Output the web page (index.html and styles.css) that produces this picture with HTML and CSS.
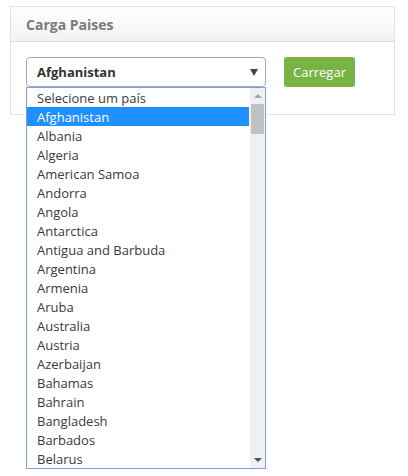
FILE: index.html
```html
<!DOCTYPE html>
<html>
<head>
<meta charset="utf-8">
<link rel="stylesheet" href="styles.css">
</head>
<body>
<div class="panel">
  <div class="panel-head">Carga Paises</div>
  <div class="panel-body">
    <div class="select-wrap">
      <div class="select">
        <span class="select-value">Afghanistan</span>
        <span class="select-arrow"></span>
      </div>
      <div class="listbox">
        <ul class="options">
          <li>Selecione um país</li>
          <li class="selected">Afghanistan</li>
          <li>Albania</li>
          <li>Algeria</li>
          <li>American Samoa</li>
          <li>Andorra</li>
          <li>Angola</li>
          <li>Antarctica</li>
          <li>Antigua and Barbuda</li>
          <li>Argentina</li>
          <li>Armenia</li>
          <li>Aruba</li>
          <li>Australia</li>
          <li>Austria</li>
          <li>Azerbaijan</li>
          <li>Bahamas</li>
          <li>Bahrain</li>
          <li>Bangladesh</li>
          <li>Barbados</li>
          <li>Belarus</li>
        </ul>
        <div class="scrollbar">
          <div class="sb-btn"><span class="tri-up"></span></div>
          <div class="sb-track"><div class="sb-thumb"></div></div>
          <div class="sb-btn"><span class="tri-down"></span></div>
        </div>
      </div>
    </div>
    <button class="btn">Carregar</button>
  </div>
</div>
</body>
</html>
```
FILE: styles.css
```css
html, body {
  margin: 0;
  padding: 0;
  background: #fff;
  font-family: "Open Sans", "Noto Sans", sans-serif;
}
body {
  min-height: 476px;
}
.panel {
  margin: 6px 0 0 10px;
  width: 383px;
  border: 1px solid #e2e2e2;
}
.panel-head {
  height: 35px;
  box-sizing: border-box;
  padding: 0 0 0 15px;
  line-height: 35px;
  font-size: 14px;
  font-weight: bold;
  color: #7a7a7a;
  background: linear-gradient(#ffffff, #f2f2f2);
  border-bottom: 1px solid #dcdcdc;
}
.panel-body {
  display: flex;
  align-items: flex-start;
  gap: 18px;
  padding: 15px 15px 27px 15px;
}
.select-wrap {
  position: relative;
  width: 240px;
}
.select {
  box-sizing: border-box;
  height: 30px;
  border: 1px solid #aaa;
  border-radius: 4px;
  display: flex;
  align-items: center;
  justify-content: space-between;
  padding: 0 7px 0 10px;
  font-size: 13px;
  font-weight: bold;
  color: #333;
}
.select-arrow {
  width: 0;
  height: 0;
  margin-top: 1px;
  border-left: 4px solid transparent;
  border-right: 4px solid transparent;
  border-top: 7px solid #444;
}
.listbox {
  position: absolute;
  z-index: 10;
  top: 30px;
  left: 0;
  width: 240px;
  height: 382px;
  box-sizing: border-box;
  border: 1px solid #7d9ee3;
  background: #fff;
  display: flex;
}
.options {
  list-style: none;
  margin: 0;
  padding: 0;
  flex: 1;
}
.options li {
  height: 19px;
  line-height: 20px;
  padding-left: 10px;
  font-size: 13px;
  color: #3a3a3a;
  white-space: nowrap;
}
.options li.selected {
  background: #1e90ff;
  color: #fff;
}
.scrollbar {
  width: 15px;
  margin-left: 1px;
  background: #f0f0f0;
  display: flex;
  flex-direction: column;
}
.sb-btn {
  height: 16px;
  display: flex;
  align-items: center;
  justify-content: center;
}
.tri-up, .tri-down {
  width: 0;
  height: 0;
  border-left: 4px solid transparent;
  border-right: 4px solid transparent;
}
.tri-up {
  border-bottom: 4px solid #a3a3a3;
}
.tri-down {
  border-top: 4px solid #505050;
}
.sb-track {
  flex: 1;
  padding: 0 1px;
}
.sb-thumb {
  height: 30px;
  background: #c1c1c1;
}
.btn {
  box-sizing: border-box;
  height: 30px;
  width: 71px;
  border: none;
  border-radius: 3px;
  background: #78b445;
  color: #fff;
  font-family: "Open Sans", "Noto Sans", sans-serif;
  font-size: 13px;
  padding: 0;
}
```
